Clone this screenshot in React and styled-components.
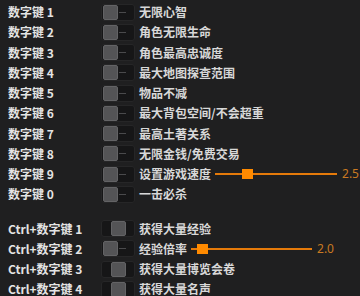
import React from "react";
import styled, { createGlobalStyle } from "styled-components";

const Global = createGlobalStyle`
  html, body { margin: 0; padding: 0; background: #1f1f20; }
  body { font-family: "Noto Sans CJK SC", "Noto Sans", sans-serif; }
`;

const Page = styled.div`
  width: 360px;
  height: 296px;
  overflow: hidden;
  background: #1f1f20;
  padding: 2px 0 0 8px;
  box-sizing: border-box;
  display: flex;
  flex-direction: column;
  gap: 14px;
`;

const Section = styled.div`
  display: flex;
  flex-direction: column;
`;

const Row = styled.div`
  height: 20.25px;
  display: flex;
  align-items: center;
  gap: 4px;
  white-space: nowrap;
`;

const Key = styled.div`
  flex: 0 0 89px;
  color: #e4e4e4;
  font-size: 12px;
  font-weight: 700;
  line-height: 1;
`;

const Label = styled.div`
  flex: 0 0 auto;
  display: flex;
  align-items: center;
  color: #d8d8d8;
  font-size: 12px;
  font-weight: 700;
  line-height: 1;
`;

const Track = styled.div`
  flex: 0 0 34px;
  width: 34px;
  height: 17px;
  box-sizing: border-box;
  background: #161617;
  border: 1px solid #262627;
  border-radius: 3px;
  display: flex;
  align-items: center;
  justify-content: ${(p) => (p.$mid ? "center" : "flex-start")};
  padding: 0 1px;
`;

const Knob = styled.div`
  width: 15px;
  height: 15px;
  box-sizing: border-box;
  background: #545456;
  border: 1px solid #636365;
  border-radius: 2px;
`;

const Dash = styled.div`
  width: 7px;
  height: 1px;
  background: #4a4a4c;
  margin-left: 1px;
`;

const Toggle = ({ mid }) => (
  <Track $mid={mid}>
    <Knob />
    {!mid && <Dash />}
  </Track>
);

const SliderBox = styled.div`
  position: relative;
  flex: 0 0 ${(p) => p.$w}px;
  height: 10px;
  margin-left: 4px;
`;

const Line = styled.div`
  position: absolute;
  left: 0;
  right: 0;
  top: 4px;
  height: 2px;
  background: #e57a0a;
`;

const Thumb = styled.div`
  position: absolute;
  top: 0;
  width: 11px;
  height: 10px;
  background: #ff8a00;
`;

const Value = styled.span`
  flex: 0 0 auto;
  color: #c97a22;
  font-family: "Noto Sans", sans-serif;
  font-size: 12px;
  font-weight: 400;
  margin-left: 5px;
`;

const Slider = ({ w, pos, value }) => (
  <>
    <SliderBox $w={w}>
      <Line />
      <Thumb style={{ left: `${pos}px` }} />
    </SliderBox>
    <Value>{value}</Value>
  </>
);

const first = [
  ["数字键 1", "无限心智"],
  ["数字键 2", "角色无限生命"],
  ["数字键 3", "角色最高忠诚度"],
  ["数字键 4", "最大地图探查范围"],
  ["数字键 5", "物品不减"],
  ["数字键 6", "最大背包空间/不会超重"],
  ["数字键 7", "最高土著关系"],
  ["数字键 8", "无限金钱/免费交易"],
  ["数字键 9", "设置游戏速度", { w: 122, pos: 27, value: "2.5" }],
  ["数字键 0", "一击必杀"],
];

const second = [
  ["Ctrl+数字键 1", "获得大量经验", null, true],
  ["Ctrl+数字键 2", "经验倍率", { w: 121, pos: 6, value: "2.0" }, false],
  ["Ctrl+数字键 3", "获得大量博览会卷", null, true],
  ["Ctrl+数字键 4", "获得大量名声", null, true],
];

export default function App() {
  return (
    <>
      <Global />
      <Page>
        <Section>
          {first.map(([k, l, s]) => (
            <Row key={k}>
              <Key>{k}</Key>
              <Toggle />
              <Label>
                {l}
                {s && <Slider {...s} />}
              </Label>
            </Row>
          ))}
        </Section>
        <Section>
          {second.map(([k, l, s, mid]) => (
            <Row key={k}>
              <Key>{k}</Key>
              <Toggle mid={mid} />
              <Label>
                {l}
                {s && <Slider {...s} />}
              </Label>
            </Row>
          ))}
        </Section>
      </Page>
    </>
  );
}
